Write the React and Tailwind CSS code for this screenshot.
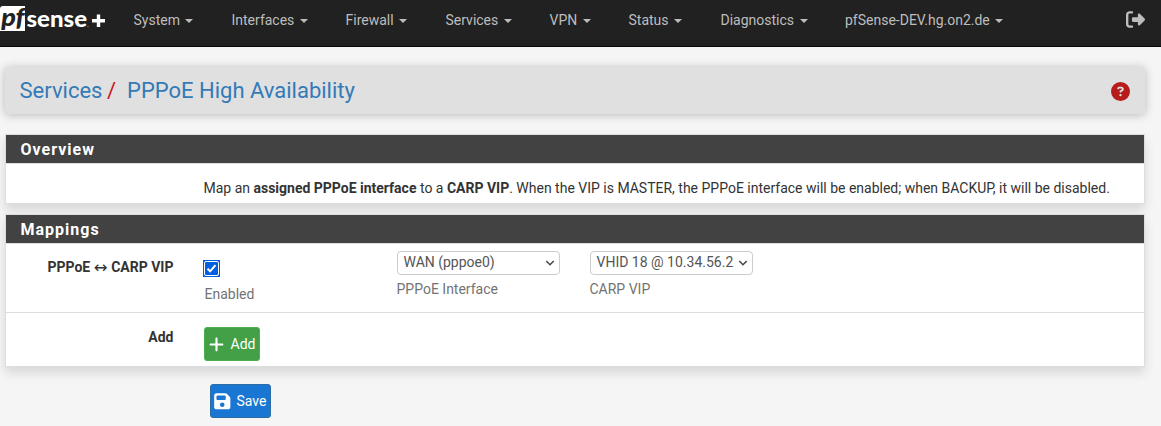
import React from "react";
import {
  FaRightFromBracket,
  FaCircleQuestion,
  FaPlus,
  FaFloppyDisk,
} from "react-icons/fa6";

const menus = [
  { label: "System", width: "w-[98px]" },
  { label: "Interfaces", width: "w-[114px]" },
  { label: "Firewall", width: "w-[100px]" },
  { label: "Services", width: "w-[104px]" },
  { label: "VPN", width: "w-[79px]" },
  { label: "Status", width: "w-[92px]" },
  { label: "Diagnostics", width: "w-[124.5px]" },
  { label: "pfSense-DEV.hg.on2.de", width: "w-[200px]" },
];

function Logo() {
  return (
    <svg width="106" height="46" viewBox="0 0 106 46" className="block shrink-0" aria-label="pfSense+">
      <path d="M3 6H25V31H0V9Q0 6 3 6Z" fill="#fff" />
      <text x="1.2" y="26.3" fontFamily="Lato, sans-serif" fontWeight="900" fontStyle="italic" fontSize="24.5" textLength="23.5" lengthAdjust="spacingAndGlyphs" fill="#212121">pf</text>
      <text x="26.5" y="26.6" fontFamily="Lato, sans-serif" fontWeight="900" fontSize="22.5" textLength="60.5" lengthAdjust="spacingAndGlyphs" fill="#fff">sense</text>
      <circle cx="88" cy="26.5" r="0.7" fill="#777" />
      <path d="M92 20.7H105M98.5 14.5V27" stroke="#fff" strokeWidth="3.4" />
    </svg>
  );
}

function Panel({ title, children, className }) {
  return (
    <section className={`border border-[#dddddd] bg-white shadow-[0_6px_10px_rgba(0,0,0,0.12)] ${className}`}>
      <h2 className="h-7 bg-[#424242] pl-[14.5px] text-[16px] font-bold leading-[29px] tracking-[1px] text-white">{title}</h2>
      <div className="border-t border-[#dddddd]">{children}</div>
    </section>
  );
}

function Select({ value, help }) {
  return (
    <div className="w-[193px] pt-[7px]">
      <div className="flex h-6 w-[163px] items-center justify-between rounded-[4px] border border-[#cccccc] pl-[5.5px] pr-[4px] text-[#555555]">
        <span className="-mt-[2px] whitespace-nowrap leading-[22px]">{value}</span>
        <svg width="10" height="10" viewBox="0 0 10 10" fill="none" stroke="#444" strokeWidth="1.5">
          <path d="M1.3 3L5 6.7L8.7 3" />
        </svg>
      </div>
      <div className="-ml-[0.5px] mt-[4px] leading-5 text-[#737373]">{help}</div>
    </div>
  );
}

export default function App() {
  return (
    <div className="h-[426px] w-[1161px] overflow-hidden bg-[#f5f5f5] font-['Roboto',sans-serif] text-[14px] leading-5 text-[#333333]">
      <nav className="flex h-[47px] border-b border-[#080808] bg-[#212121] text-[#bdbdbd]">
        <Logo />
        <div className="ml-[27.5px] flex pt-[10px]">
          {menus.map((m) => (
            <a key={m.label} className={`flex h-5 items-center whitespace-nowrap ${m.width}`}>
              {m.label}
              <span className="ml-[5.5px] mt-px border-x-4 border-t-4 border-x-transparent border-t-[#bdbdbd]" />
            </a>
          ))}
        </div>
        <FaRightFromBracket className="ml-auto mr-[16px] mt-[10px] size-[19px]" />
      </nav>

      <header className="ml-[5px] mt-5 flex h-[47px] w-[1140px] items-center justify-between rounded-[4px] bg-[#e0e0e0] px-[15px] shadow-[0_1px_10px_rgba(0,0,0,0.25)]">
        <h1 className="-ml-[0.5px] flex text-[22px] leading-[30px] text-[#337ab7]">
          <span>Services</span>
          <span className="ml-[4.5px] text-[#c9171e]">/</span>
          <span className="ml-[11px]">PPPoE High Availability</span>
        </h1>
        <FaCircleQuestion className="mt-[2px] size-[19px] text-[#b71c1c]" />
      </header>

      <main className="ml-[5px] w-[1140px]">
        <Panel title="Overview" className="mt-5 h-[70px]">
          <p className="whitespace-nowrap pl-[197.5px] pt-[14px] tracking-[-0.003px]">
            Map an <b>assigned PPPoE interface</b> to a <b>CARP VIP</b>. When the VIP is MASTER, the PPPoE interface will be enabled; when BACKUP, it will be disabled.
          </p>
        </Panel>

        <Panel title="Mappings" className="mt-[10px] h-[153px]">
          <div className="flex h-[69px] border-b border-[#dddddd]">
            <div className="flex w-[167.5px] items-center justify-end self-start pt-[13px] font-bold">
              PPPoE
              <span className="mx-[3.5px] flex w-[14px] justify-center pt-px font-['DejaVu_Sans',sans-serif] text-[16.5px] font-normal leading-[19px]">↔</span>
              CARP VIP
            </div>
            <div className="w-[223.5px] pl-[29.5px] pt-[16px]">
              <div className="flex size-[17px] items-center justify-center bg-[#0060df]">
                <div className="flex size-[15px] items-center justify-center rounded-[2px] border border-white">
                  <svg width="11" height="11" viewBox="0 0 11 11" fill="none" stroke="#fff" strokeWidth="2">
                    <path d="M1.5 5.7L4.1 8.3L9.5 2.2" />
                  </svg>
                </div>
              </div>
              <div className="mt-[7px] pl-[1.5px] text-[#737373]">Enabled</div>
            </div>
            <Select value="WAN (pppoe0)" help="PPPoE Interface" />
            <Select value="VHID 18 @ 10.34.56.2" help="CARP VIP" />
          </div>
          <div className="flex">
            <div className="w-[167.5px] pt-[14px] text-right font-bold">Add</div>
            <button className="ml-[30.5px] mt-[14px] flex h-[34px] w-[56px] items-center rounded-[3px] border border-[#4caf50] bg-[#43a047] pl-[3px] text-white">
              <FaPlus className="size-[17px]" />
              <span className="ml-[5.5px]">Add</span>
            </button>
          </div>
        </Panel>

        <button className="ml-[205px] mt-[17px] flex h-[34px] w-[61px] items-center rounded-[3px] border border-[#2e6da4] bg-[#1976d2] pl-[2px] text-white">
          <FaFloppyDisk className="size-[18.5px]" />
          <span className="ml-[5px]">Save</span>
        </button>
      </main>
    </div>
  );
}
